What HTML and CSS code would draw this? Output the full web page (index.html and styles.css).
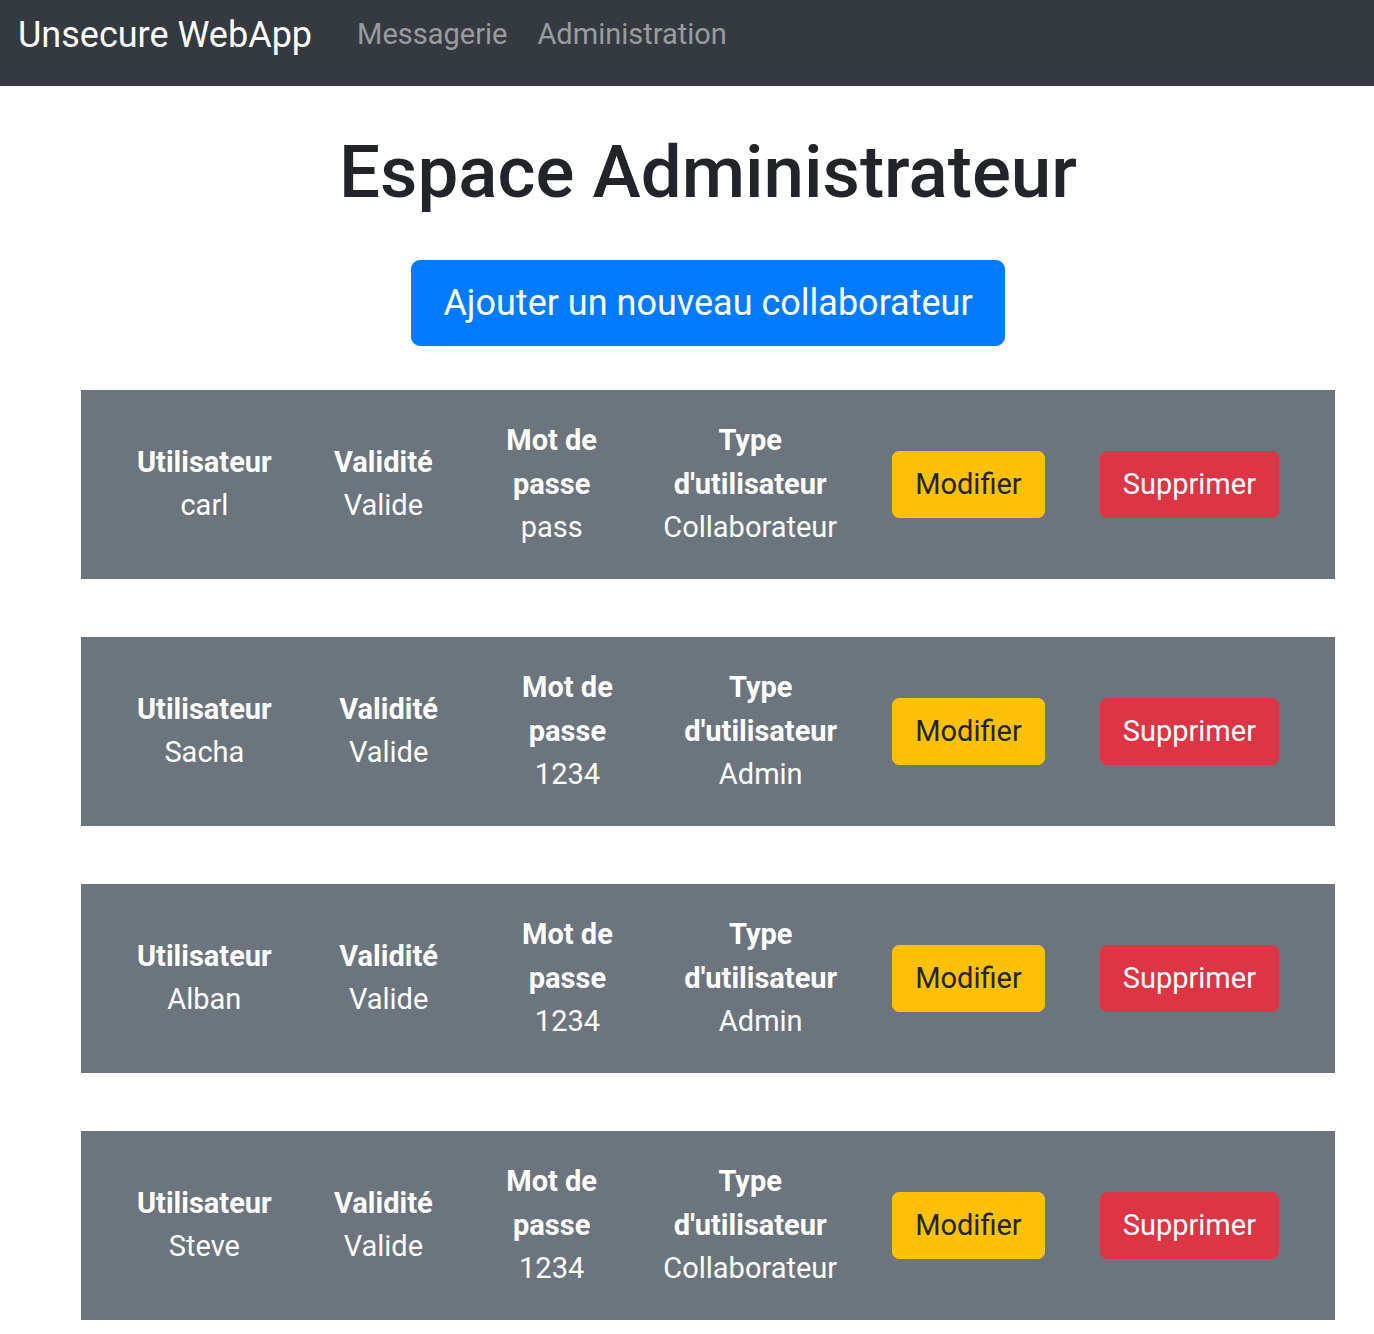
FILE: index.html
```html
<!DOCTYPE html>
<html lang="fr">
<head>
<meta charset="utf-8">
<title>Unsecure WebApp</title>
<link rel="stylesheet" href="styles.css">
</head>
<body>
<nav class="navbar">
  <a class="brand" href="#">Unsecure WebApp</a>
  <ul class="nav">
    <li><a class="nav-link" href="#">Messagerie</a></li>
    <li><a class="nav-link" href="#">Administration</a></li>
  </ul>
</nav>
<main class="main">
  <h1 class="title">Espace Administrateur</h1>
  <div class="add-wrap"><a class="btn btn-lg btn-primary" href="#">Ajouter un nouveau collaborateur</a></div>

  <div class="user-row">
    <div class="col"><div class="label">Utilisateur</div><div class="value">carl</div></div>
    <div class="col"><div class="label">Validité</div><div class="value">Valide</div></div>
    <div class="col"><div class="label">Mot de passe</div><div class="value">pass</div></div>
    <div class="col"><div class="label">Type d'utilisateur</div><div class="value">Collaborateur</div></div>
    <div class="col"><a class="btn btn-warning" href="#">Modifier</a></div>
    <div class="col"><a class="btn btn-danger" href="#">Supprimer</a></div>
  </div>

  <div class="user-row">
    <div class="col"><div class="label">Utilisateur</div><div class="value">Sacha</div></div>
    <div class="col"><div class="label">Validité</div><div class="value">Valide</div></div>
    <div class="col"><div class="label">Mot de passe</div><div class="value">1234</div></div>
    <div class="col"><div class="label">Type d'utilisateur</div><div class="value">Admin</div></div>
    <div class="col"><a class="btn btn-warning" href="#">Modifier</a></div>
    <div class="col"><a class="btn btn-danger" href="#">Supprimer</a></div>
  </div>

  <div class="user-row">
    <div class="col"><div class="label">Utilisateur</div><div class="value">Alban</div></div>
    <div class="col"><div class="label">Validité</div><div class="value">Valide</div></div>
    <div class="col"><div class="label">Mot de passe</div><div class="value">1234</div></div>
    <div class="col"><div class="label">Type d'utilisateur</div><div class="value">Admin</div></div>
    <div class="col"><a class="btn btn-warning" href="#">Modifier</a></div>
    <div class="col"><a class="btn btn-danger" href="#">Supprimer</a></div>
  </div>

  <div class="user-row">
    <div class="col"><div class="label">Utilisateur</div><div class="value">Steve</div></div>
    <div class="col"><div class="label">Validité</div><div class="value">Valide</div></div>
    <div class="col"><div class="label">Mot de passe</div><div class="value">1234</div></div>
    <div class="col"><div class="label">Type d'utilisateur</div><div class="value">Collaborateur</div></div>
    <div class="col"><a class="btn btn-warning" href="#">Modifier</a></div>
    <div class="col"><a class="btn btn-danger" href="#">Supprimer</a></div>
  </div>
</main>
</body>
</html>
```

FILE: styles.css
```css
*, *::before, *::after { box-sizing: border-box; }

html, body {
  margin: 0;
  padding: 0;
  background: #fff;
}

body {
  font-family: Roboto, "Liberation Sans", sans-serif;
  font-size: 29px;
  line-height: 1.5;
  color: #212529;
}

a { text-decoration: none; }

.navbar {
  display: flex;
  align-items: flex-start;
  height: 86px;
  padding: 8px 18px 0;
  background: #343a40;
}

.brand {
  font-size: 36px;
  line-height: 54px;
  color: #fff;
  margin-right: 30px;
}

.nav {
  display: flex;
  list-style: none;
  margin: 5px 0 0;
  padding: 0;
}

.nav-link {
  display: block;
  padding: 0 15px;
  font-size: 29px;
  line-height: 43.5px;
  color: rgba(255, 255, 255, 0.5);
}

.main {
  width: 1254px;
  margin-left: 81px;
}

.title {
  margin: 43px 0 42px;
  font-size: 72.7px;
  font-weight: 500;
  line-height: 88.8px;
  text-align: center;
  color: #212529;
}

.add-wrap {
  display: flex;
  justify-content: center;
  margin-bottom: 44px;
}

.btn {
  display: inline-block;
  border: 1px solid transparent;
  text-align: center;
  white-space: nowrap;
  font-weight: 400;
}

.btn-lg {
  font-size: 36px;
  line-height: 52px;
  padding: 16px 31.5px;
  border-radius: 9px;
}

.btn-primary {
  background: #007bff;
  border-color: #007bff;
  color: #fff;
}

.user-row {
  display: flex;
  align-items: center;
  padding: 29.25px 28.5px;
  margin-bottom: 58px;
  background: #6c757d;
  color: #fff;
  text-align: center;
  line-height: 43.5px;
}

.col {
  flex: 1 1 0;
  padding: 0 27.5px;
}

.label {
  font-weight: 700;
}

.value {
  font-weight: 400;
}

.user-row .btn {
  font-size: 29px;
  line-height: 43.5px;
  padding: 11px 22px;
  border-radius: 7px;
}

.btn-warning {
  background: #ffc107;
  border-color: #ffc107;
  color: #212529;
}

.btn-danger {
  background: #dc3545;
  border-color: #dc3545;
  color: #fff;
}
```
